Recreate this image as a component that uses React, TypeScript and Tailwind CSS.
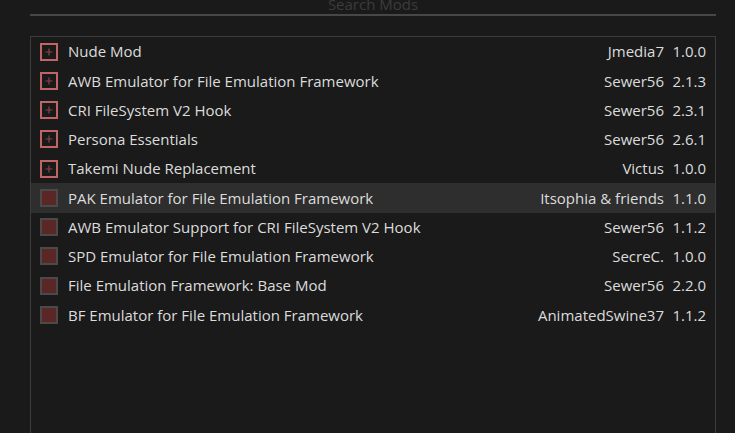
import React from 'react';

type Mod = {
  name: string;
  author: string;
  version: string;
  enabled: boolean;
};

const mods: Mod[] = [
  { name: 'Nude Mod', author: 'Jmedia7', version: '1.0.0', enabled: true },
  { name: 'AWB Emulator for File Emulation Framework', author: 'Sewer56', version: '2.1.3', enabled: true },
  { name: 'CRI FileSystem V2 Hook', author: 'Sewer56', version: '2.3.1', enabled: true },
  { name: 'Persona Essentials', author: 'Sewer56', version: '2.6.1', enabled: true },
  { name: 'Takemi Nude Replacement', author: 'Victus', version: '1.0.0', enabled: true },
  { name: 'PAK Emulator for File Emulation Framework', author: 'Itsophia & friends', version: '1.1.0', enabled: false },
  { name: 'AWB Emulator Support for CRI FileSystem V2 Hook', author: 'Sewer56', version: '1.1.2', enabled: false },
  { name: 'SPD Emulator for File Emulation Framework', author: 'SecreC.', version: '1.0.0', enabled: false },
  { name: 'File Emulation Framework: Base Mod', author: 'Sewer56', version: '2.2.0', enabled: false },
  { name: 'BF Emulator for File Emulation Framework', author: 'AnimatedSwine37', version: '1.1.2', enabled: false },
];

function CheckBox({ checked }: { checked: boolean }) {
  if (checked) {
    return (
      <div className="w-[18px] h-[18px] shrink-0 border-2 border-[#c06565] bg-[#1a1a1a] flex items-center justify-center">
        <svg width="10" height="10" viewBox="0 0 10 10">
          <path d="M5 1.5v7M1.5 5h7" stroke="#8c4444" strokeWidth="1.2" />
        </svg>
      </div>
    );
  }
  return <div className="w-[18px] h-[18px] shrink-0 border-2 border-[#4a4a4a] bg-[#5a2626]" />;
}

export default function App() {
  const selected = 5;

  return (
    <div
      className="w-[735px] h-[433px] overflow-hidden bg-[#1a1a1a] text-[15px] text-[#dcdcdc]"
      style={{ fontFamily: '"Open Sans", "Noto Sans", sans-serif' }}
    >
      {/* Search */}
      <div className="mx-[30px] w-[686px] mt-[-6px] h-[22px] leading-[20px] border-b-2 border-[#474747] text-center text-[#3c3c3c]">
        Search Mods
      </div>

      {/* Mod list */}
      <div className="mt-[20px] ml-[30px] w-[686px] h-[420px] border border-[#3c3c3c]">
        {mods.map((m, i) => (
          <div
            key={m.name}
            className={`h-[29.25px] flex items-center pl-[9px] pr-[9px] ${i === selected ? 'bg-[#2e2e2e]' : ''}`}
          >
            <CheckBox checked={m.enabled} />
            <span className="ml-[10px] flex-1 truncate">{m.name}</span>
            <span className="text-right">{m.author}</span>
            <span className="ml-[8px] w-[34px] text-right">{m.version}</span>
          </div>
        ))}
      </div>
    </div>
  );
}
